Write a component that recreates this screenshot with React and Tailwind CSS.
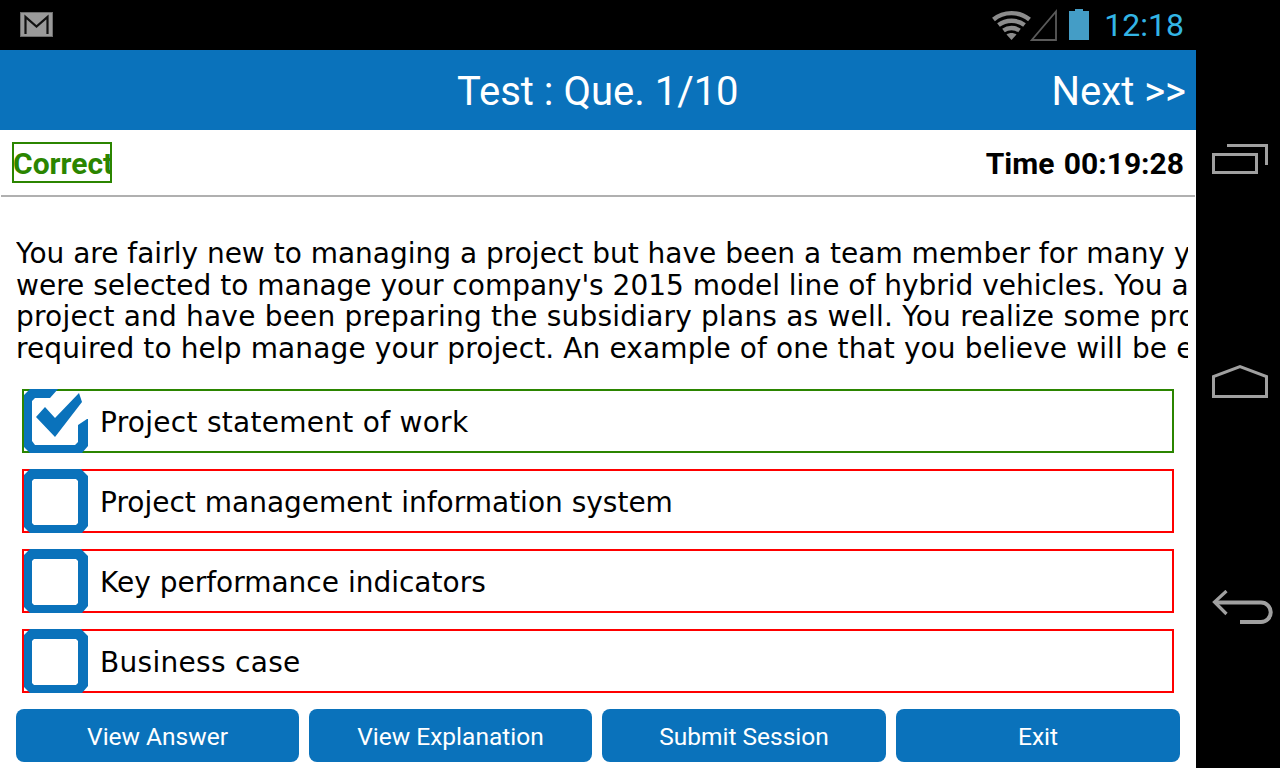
const roboto = "font-['Roboto',sans-serif]";
const dejavu = "font-['DejaVu_Sans',sans-serif]";

function Mail() {
  return (
    <svg width="33" height="25" viewBox="0 0 33 25" className="block">
      <rect x="0.5" y="0.5" width="32" height="24" fill="#9a9a9a" stroke="#6e6e6e" />
      <path d="M5.500 22V5L16.500 14.500 27.500 5V22" fill="none" stroke="#111" strokeWidth="2.200" />
    </svg>
  );
}
function Wifi() {
  return (
    <svg width="39" height="30" viewBox="0 0 39 30" className="block">
      <g fill="none" stroke="#8c8c8c" strokeWidth="4.400">
        <path d="M1.500 9.500C11.500 1 27.500 1 37.500 9.500" />
        <path d="M6.500 15C14 9.300 25 9.300 32.500 15" />
        <path d="M11.500 20.500C16 17.200 23 17.200 27.500 20.500" />
      </g>
      <path d="M14.500 24.500C17.500 22.500 21.500 22.500 24.500 24.500L19.500 30Z" fill="#8c8c8c" />
    </svg>
  );
}
function Signal() {
  return (
    <svg width="27" height="32" viewBox="0 0 27 32" className="block">
      <path d="M26 2.500V31H1.800Z" fill="none" stroke="#5a5a5a" strokeWidth="1.800" />
    </svg>
  );
}
function Battery() {
  return (
    <svg width="20" height="31" viewBox="0 0 20 31" className="block">
      <path d="M6 0H14V2H20V31H0V2H6Z" fill="#449dc6" />
    </svg>
  );
}
function Recent() {
  return (
    <svg width="56" height="30" viewBox="0 0 56 30" className="block">
      <g fill="none" stroke="#a0a0a0" strokeWidth="3">
        <rect x="1.500" y="10.500" width="43" height="18" />
        <path d="M15 1.500H54.500V21" />
      </g>
    </svg>
  );
}
function Home() {
  return (
    <svg width="56" height="33" viewBox="0 0 56 33" className="block">
      <path d="M1.500 31.500V11.500L28 1.700 54.500 11.500V31.500Z" fill="none" stroke="#a0a0a0" strokeWidth="3" />
    </svg>
  );
}
function Back() {
  return (
    <svg width="61" height="34" viewBox="0 0 61 34" className="block">
      <path d="M14.500 1L2.500 12 14.500 24" fill="none" stroke="#a0a0a0" strokeWidth="3.200" />
      <path d="M3 12.500H49A9.750 9.750 0 0 1 49 32H28" fill="none" stroke="#a0a0a0" strokeWidth="4" />
    </svg>
  );
}
function Box({ checked }) {
  return (
    <svg width="64" height="64" viewBox="0 0 64 64" className="block shrink-0 relative">
      {checked ? (
        <>
          <path
            d="M6 0H34L26 9H11L8 12V52L11 56H51L54 53V36L63 30H64V57L58 64H6L0 58V6Z"
            fill="#0a72bb"
          />
          <path d="M12 28L21 18 31 29 55 4 58 13 31 48Z" fill="#0a72bb" />
        </>
      ) : (
        <path
          fillRule="evenodd"
          d="M6 0H57L64 7V57L58 64H6L0 58V6ZM10 10L8 12V54L10 56H52L54 54V12L52 10Z"
          fill="#0a72bb"
        />
      )}
    </svg>
  );
}

const lines = [
  { text: "You are fairly new to managing a project but have been a team member for many years. You", track: "" },
  { text: "were selected to manage your company's 2015 model line of hybrid vehicles. You are managing this", track: "" },
  { text: "project and have been preparing the subsidiary plans as well. You realize some project documents are", track: "tracking-[0.2px]" },
  { text: "required to help manage your project. An example of one that you believe will be especially useful is", track: "tracking-[0.12px]" },
];
const options = [
  { text: "Project statement of work", checked: true, track: "tracking-[0.28px]" },
  { text: "Project management information system", checked: false, track: "" },
  { text: "Key performance indicators", checked: false, track: "" },
  { text: "Business case", checked: false, track: "tracking-[0.3px]" },
];
const buttons = [
  { text: "View Answer", w: "w-[283px]" },
  { text: "View Explanation", w: "w-[283px]" },
  { text: "Submit Session", w: "w-[284px]" },
  { text: "Exit", w: "w-[284px]" },
];

export default function App() {
  return (
    <div className={`flex h-[768px] w-[1280px] overflow-hidden bg-black ${roboto}`}>
      <main className="flex w-[1196px] shrink-0 flex-col">
        <div className="flex h-[50px] items-start justify-between bg-black pl-[20px] pr-[12px]">
          <div className="mt-[12px]"><Mail /></div>
          <div className="flex items-start">
            <div className="mt-[10px]"><Wifi /></div>
            <div className="mt-[9px] -ml-[1px]"><Signal /></div>
            <div className="mt-[9px] ml-[12px]"><Battery /></div>
            <span className="mt-[9px] ml-[15px] text-[32px] leading-[33px] font-normal text-[#33b5e5]">12:18</span>
          </div>
        </div>
        <header className="relative flex h-[80px] items-center justify-end bg-[#0a72bb] pr-[10px] pt-[3px] text-white">
          <h1 className="absolute left-[457px] top-[19px] text-[40px] leading-[46px] font-normal whitespace-nowrap">Test : Que. 1/10</h1>
          <span className="text-[40px] leading-[46px] whitespace-nowrap">Next &gt;&gt;</span>
        </header>
        <section className="flex min-h-0 flex-1 flex-col bg-white">
          <div className="mx-[1px] flex h-[67px] items-start justify-between border-b-2 border-[#b0b0b0] pt-[12px] pl-[11px] pr-[11px]">
            <span className="box-border flex h-[41px] w-[100px] items-center overflow-hidden border-2 border-[#2b8500] pt-[2px] text-[30px] leading-none font-bold whitespace-nowrap text-[#2b8500]"><span className="-ml-[1px]">Correct</span></span>
            <span className="mt-[5px] text-[30px] leading-[34px] font-bold text-black [word-spacing:2px]">Time 00:19:28</span>
          </div>
          <div className={`ml-[16px] mt-[41px] h-[126px] w-[1172px] overflow-hidden text-[28px] leading-[31.5px] text-black ${dejavu}`}>
            {lines.map((l) => (
              <div key={l.text} className={`whitespace-nowrap ${l.track}`}>{l.text}</div>
            ))}
          </div>
          <div className="mt-[25px] flex flex-col gap-[16px] px-[22px]">
            {options.map((o) => (
              <div key={o.text} className={`box-border flex h-[64px] items-center border-2 ${o.checked ? "border-[#2b8500]" : "border-[#ff0000]"}`}>
                <Box checked={o.checked} />
                <span className={`ml-[12px] pt-[4px] text-[28px] text-black ${dejavu} ${o.track}`}>{o.text}</span>
              </div>
            ))}
          </div>
          <div className="mt-[16px] flex gap-[10px] pl-[16px]">
            {buttons.map((b) => (
              <button key={b.text} className={`h-[53px] ${b.w} rounded-[8px] bg-[#0a72bb] pt-[4px] text-[24.5px] text-white`}>{b.text}</button>
            ))}
          </div>
        </section>
      </main>
      <aside className="flex flex-1 flex-col items-start bg-black pl-[16px]">
        <div className="mt-[144px]"><Recent /></div>
        <div className="mt-[191px]"><Home /></div>
        <div className="mt-[192px]"><Back /></div>
      </aside>
    </div>
  );
}
